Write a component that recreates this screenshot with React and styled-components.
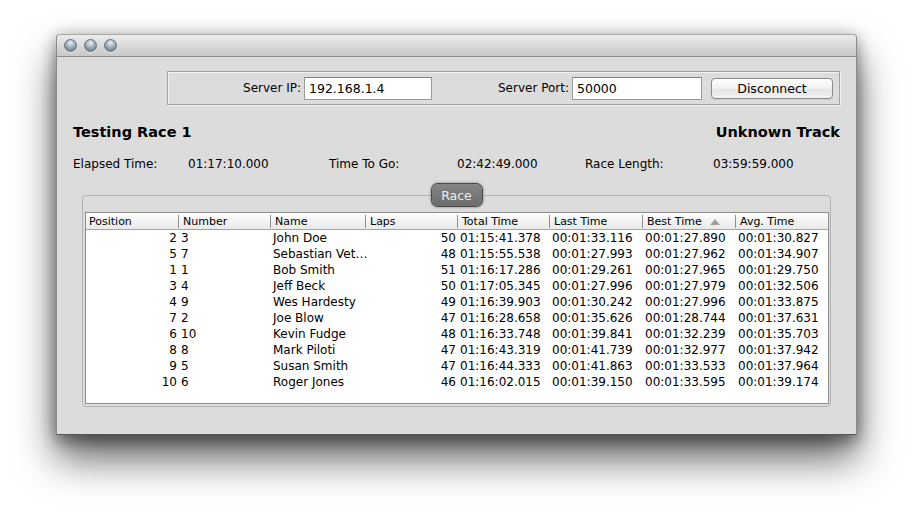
import React from "react";
import styled, { createGlobalStyle } from "styled-components";

const Global = createGlobalStyle`
  html, body { margin: 0; padding: 0; background: #ffffff; }
  body { font-family: "DejaVu Sans", "Liberation Sans", sans-serif; color: #000; }
  * { box-sizing: border-box; }
`;

const Page = styled.div`
  width: 914px;
  height: 514px;
  padding: 34px 0 0 56px;
  overflow: hidden;
`;

const Window = styled.div`
  width: 801px;
  height: 401px;
  background: #dcdcdc;
  border: 1px solid #8a8a8a;
  border-top-color: #a8a8a8;
  border-bottom-color: #555;
  border-radius: 4px 4px 0 0;
  box-shadow: 0 24px 40px rgba(0, 0, 0, 0.6), 0 8px 16px rgba(0, 0, 0, 0.3), 0 0 16px rgba(0, 0, 0, 0.18);
  display: flex;
  flex-direction: column;
`;

const TitleBar = styled.div`
  height: 22px;
  flex: none;
  background: linear-gradient(#ececec, #c8c8c8);
  border-bottom: 1px solid #8c8c8c;
  border-radius: 4px 4px 0 0;
  display: flex;
  align-items: center;
  gap: 7px;
  padding-left: 7px;
`;

const Light = styled.span`
  width: 13px;
  height: 13px;
  border-radius: 50%;
  border: 1px solid #64707b;
  background: radial-gradient(circle at 50% 28%, #eef3f7 0%, #b3c1cc 32%, #7a8a98 72%, #a2b0bb 100%);
  box-shadow: 0 1px 0 rgba(255, 255, 255, 0.6);
`;

const Content = styled.div`
  flex: 1;
  padding: 14px 16px 0 16px;
  display: flex;
  flex-direction: column;
`;

const ConnPanel = styled.div`
  align-self: flex-end;
  width: 673px;
  height: 34px;
  border: 1px solid #a2a2a2;
  box-shadow: inset 1px 1px 0 #f2f2f2, 1px 1px 0 #f0f0f0;
  display: flex;
  align-items: center;
  justify-content: flex-end;
  padding-right: 6px;
  font-size: 12px;
`;

const Field = styled.label`
  display: flex;
  align-items: center;
  gap: 3px;
  margin-right: ${(p) => p.$mr}px;
`;

const Input = styled.div`
  width: ${(p) => p.$w}px;
  height: 23px;
  background: #fff;
  border: 1px solid #9a9a9a;
  border-top-color: #7f7f7f;
  font-size: 12.5px;
  display: flex;
  align-items: center;
  padding-left: 4px;
`;

const Button = styled.div`
  width: 122px;
  height: 21px;
  border: 1px solid #8b8b8b;
  border-radius: 4px;
  background: linear-gradient(#ffffff, #f1f1f1 50%, #e4e4e4 51%, #f2f2f2);
  display: flex;
  align-items: center;
  justify-content: center;
  font-size: 12.5px;
  box-shadow: 0 1px 0 rgba(0, 0, 0, 0.08);
`;

const TitleRow = styled.div`
  display: flex;
  justify-content: space-between;
  align-items: center;
  margin-top: 17px;
  font-weight: bold;
  font-size: 14.5px;
  height: 20px;
`;

const InfoRow = styled.div`
  display: grid;
  grid-template-columns: 115px 141px 128px 128px 128px auto;
  margin-top: 14px;
  font-size: 12px;
  height: 16px;
  align-items: center;
`;

const Group = styled.div`
  position: relative;
  margin: 23px 9px 0 9px;
  height: 212px;
  border: 1px solid #b4b4b4;
  border-radius: 4px;
  padding: 16px 2px 2px 2px;
  display: flex;
`;

const GroupTitle = styled.div`
  position: absolute;
  top: -12px;
  left: 50%;
  transform: translateX(-50%);
  width: 50px;
  height: 22px;
  border-radius: 6px;
  background: linear-gradient(#858585, #6c6c6c);
  color: #ececec;
  font-size: 12.5px;
  display: flex;
  align-items: center;
  justify-content: center;
  box-shadow: 0 0 0 1px #4a4a4a, 0 0 3px 1px rgba(40, 60, 80, 0.6);
`;

const Table = styled.div`
  flex: 1;
  background: #fff;
  border: 1px solid #8e8e8e;
  display: flex;
  flex-direction: column;
`;

const cols = "92px 92px 95px 92px 92px 93px 93px 93px";

const Header = styled.div`
  display: grid;
  grid-template-columns: ${cols};
  height: 17px;
  background: linear-gradient(#ffffff, #f3f3f3 50%, #e9e9e9);
  border-bottom: 1px solid #a6a6a6;
  font-size: 11px;
`;

const HeadCell = styled.div`
  display: flex;
  align-items: center;
  padding-left: ${(p) => (p.$first ? 3 : 4)}px;
  border-left: ${(p) => (p.$first ? "none" : "1px solid #8f8f8f")};
  margin: 2px 0;
  white-space: nowrap;
`;

const SortArrow = styled.span`
  width: 0;
  height: 0;
  border-left: 5px solid transparent;
  border-right: 5px solid transparent;
  border-bottom: 6px solid #a0a0a0;
  margin-left: 8px;
`;

const Row = styled.div`
  display: grid;
  grid-template-columns: ${cols};
  height: 16px;
  font-size: 12px;
  align-items: center;
`;

const Cell = styled.div`
  text-align: ${(p) => p.$align || "left"};
  padding: ${(p) => (p.$align === "right" ? "0 1px 0 0" : "0 0 0 3px")};
  white-space: nowrap;
  min-width: 0;
`;

const rows = [
  ["2", "3", "John Doe", "50", "01:15:41.378", "00:01:33.116", "00:01:27.890", "00:01:30.827"],
  ["5", "7", "Sebastian Vet…", "48", "01:15:55.538", "00:01:27.993", "00:01:27.962", "00:01:34.907"],
  ["1", "1", "Bob Smith", "51", "01:16:17.286", "00:01:29.261", "00:01:27.965", "00:01:29.750"],
  ["3", "4", "Jeff Beck", "50", "01:17:05.345", "00:01:27.996", "00:01:27.979", "00:01:32.506"],
  ["4", "9", "Wes Hardesty", "49", "01:16:39.903", "00:01:30.242", "00:01:27.996", "00:01:33.875"],
  ["7", "2", "Joe Blow", "47", "01:16:28.658", "00:01:35.626", "00:01:28.744", "00:01:37.631"],
  ["6", "10", "Kevin Fudge", "48", "01:16:33.748", "00:01:39.841", "00:01:32.239", "00:01:35.703"],
  ["8", "8", "Mark Piloti", "47", "01:16:43.319", "00:01:41.739", "00:01:32.977", "00:01:37.942"],
  ["9", "5", "Susan Smith", "47", "01:16:44.333", "00:01:41.863", "00:01:33.533", "00:01:37.964"],
  ["10", "6", "Roger Jones", "46", "01:16:02.015", "00:01:39.150", "00:01:33.595", "00:01:39.174"],
];

const headers = ["Position", "Number", "Name", "Laps", "Total Time", "Last Time", "Best Time", "Avg. Time"];
const aligns = ["right", "left", "left", "right", "left", "left", "left", "left"];

export default function App() {
  return (
    <>
      <Global />
      <Page>
        <Window>
          <TitleBar>
            <Light />
            <Light />
            <Light />
          </TitleBar>
          <Content>
            <ConnPanel>
              <Field $mr={66}>
                Server IP:
                <Input $w={128}>192.168.1.4</Input>
              </Field>
              <Field $mr={9}>
                Server Port:
                <Input $w={130}>50000</Input>
              </Field>
              <Button>Disconnect</Button>
            </ConnPanel>
            <TitleRow>
              <span>Testing Race 1</span>
              <span>Unknown Track</span>
            </TitleRow>
            <InfoRow>
              <span>Elapsed Time:</span>
              <span>01:17:10.000</span>
              <span>Time To Go:</span>
              <span>02:42:49.000</span>
              <span>Race Length:</span>
              <span>03:59:59.000</span>
            </InfoRow>
            <Group>
              <GroupTitle>Race</GroupTitle>
              <Table>
                <Header>
                  {headers.map((h, i) => (
                    <HeadCell key={h} $first={i === 0}>
                      {h}
                      {h === "Best Time" && <SortArrow />}
                    </HeadCell>
                  ))}
                </Header>
                {rows.map((r, ri) => (
                  <Row key={ri}>
                    {r.map((c, ci) => (
                      <Cell key={ci} $align={aligns[ci]}>
                        {c}
                      </Cell>
                    ))}
                  </Row>
                ))}
              </Table>
            </Group>
          </Content>
        </Window>
      </Page>
    </>
  );
}
